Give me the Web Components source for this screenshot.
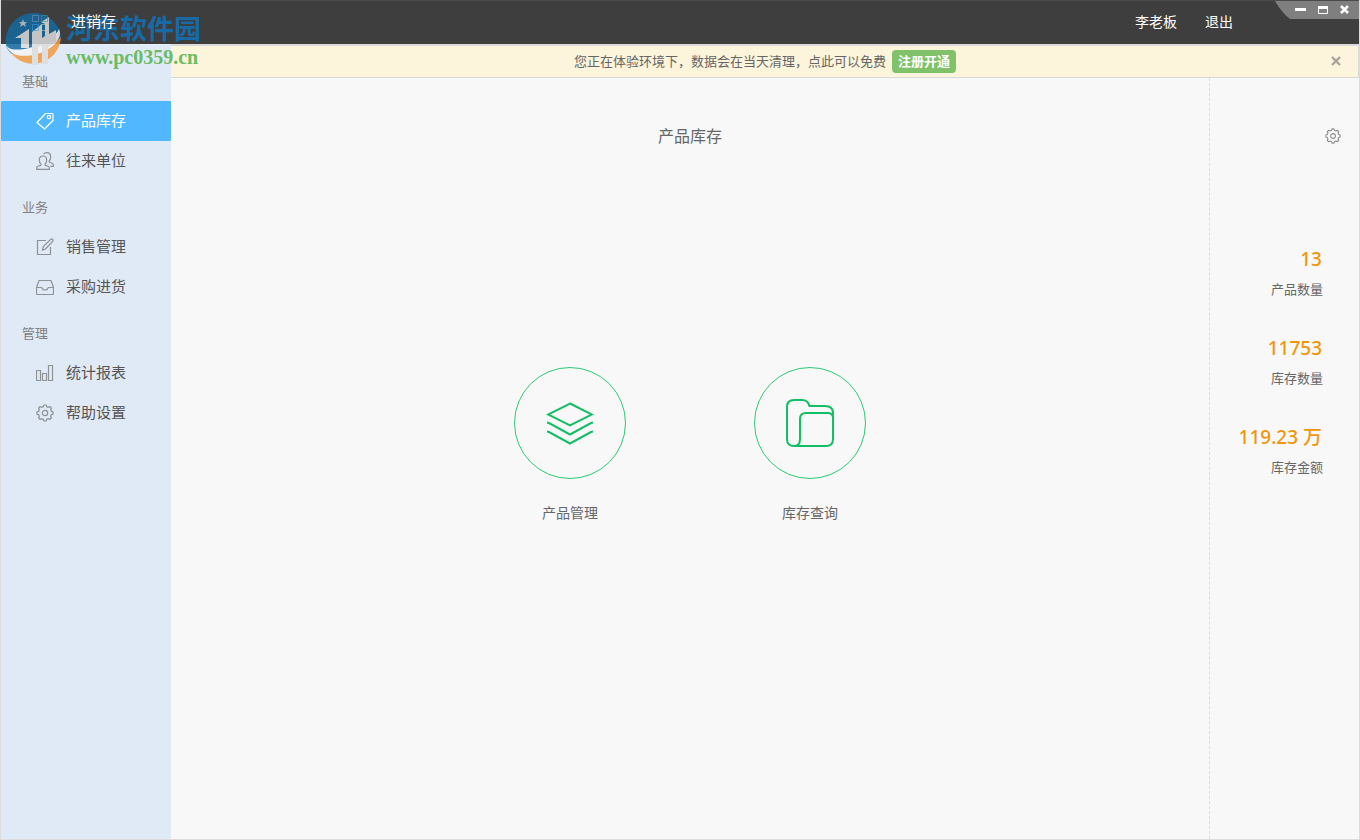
<!DOCTYPE html>
<html lang="zh-CN">
<head>
<meta charset="utf-8">
<title>进销存</title>
<style>
  html, body { margin: 0; }
  body { font: 13px/20px "Noto Sans CJK SC", sans-serif; color: #666; background: #f8f8f8; }
</style>
</head>
<body>
<app-frame>
  <app-header slot="header" heading="进销存" user="李老板"></app-header>
  <side-nav slot="nav">
    <nav-group label="基础">
      <nav-item icon="tag" active>产品库存</nav-item>
      <nav-item icon="users">往来单位</nav-item>
    </nav-group>
    <nav-group label="业务">
      <nav-item icon="edit">销售管理</nav-item>
      <nav-item icon="inbox">采购进货</nav-item>
    </nav-group>
    <nav-group label="管理">
      <nav-item icon="bars">统计报表</nav-item>
      <nav-item icon="gear">帮助设置</nav-item>
    </nav-group>
  </side-nav>
  <notice-bar slot="notice" action="注册开通">您正在体验环境下，数据会在当天清理，点此可以免费</notice-bar>
  <launch-pad slot="content" heading="产品库存">
    <launch-tile icon="layers">产品管理</launch-tile>
    <launch-tile icon="folder">库存查询</launch-tile>
  </launch-pad>
  <stat-panel slot="aside">
    <stat-item value="13">产品数量</stat-item>
    <stat-item value="11753">库存数量</stat-item>
    <stat-item value="119.23 万">库存金额</stat-item>
  </stat-panel>
  <site-mark slot="mark"></site-mark>
</app-frame>

<script>
const gearPath = (() => {
  const pts = [];
  for (let i = 0; i < 8; i++) {
    const a = i * 45;
    for (const [d, r] of [[-8, 8.1], [8, 8.1], [14, 6.6], [31, 6.6]]) {
      const t = (a + d) * Math.PI / 180;
      pts.push((9 + r * Math.sin(t)).toFixed(2) + ' ' + (9 - r * Math.cos(t)).toFixed(2));
    }
  }
  return 'M' + pts.join('L') + 'Z';
})();

const icons = {
  tag: '<path d="M1 10.500 9.500 1.500H16q1 0 1 1V8.500L8.500 17Z" stroke-linejoin="round"/><circle cx="13" cy="5" r="1.700"/>',
  users: '<path d="M.7 17.300v-1.600q0-1 1.200-1.400l2.600-.9q.8-.4.500-1.100C3.700 11 3.300 9.500 3.300 8c0-2.700 1.500-4 3.700-4s3.700 1.300 3.700 4c0 1.500-.4 3-1.700 4.300q-.3.700.5 1.100l2.600.9q1.200.4 1.200 1.400v1.600Z"/><path d="M7.500 2C8.200 1.200 9.300.7 10.700.7c2.600 0 4 1.600 4 4.200 0 1.600-.5 3.100-1.600 4.300q-.3.800.5 1.100l2.400.9q1.300.5 1.300 1.500v1.600h-3"/>',
  edit: '<path d="M10 2.500H1.500v14h13V9"/><path d="m6.500 12 .8-3.400 7.500-7.300q1-.8 1.900 0 .9 1 0 2L9.500 11Z"/>',
  inbox: '<path d="M.5 9.500 3 2.500h12l2.500 7v6q0 1-1 1h-15q-1 0-1-1Zm0 0H5q1 0 1.300 1 .4 1.500 2.700 1.500t2.700-1.500q.3-1 1.300-1h4.500"/>',
  bars: '<path d="M.5 6.500h4v10h-4Zm6 3h4v7h-4Zm6-8h4v15h-4Z"/>',
  gear: `<path d="${gearPath}" stroke-linejoin="round"/><circle cx="9" cy="9" r="2.700"/>`
};
const icon = (name, size) =>
  `<svg width="${size}" height="${size}" viewBox="0 0 18 18" fill="none" stroke="currentColor" stroke-width="1.200" aria-hidden="true">${icons[name]}</svg>`;

const glyphs = {
  layers: '<path d="M24 4.500 46 15.500 24 26.500 2 15.500Z"/><path d="M1 23.500l2 .5 21 11.500L45 24l2-.5M1 32.500l2 .5 21 11.500L45 33l2-.5"/>',
  folder: '<path d="M8 47Q1 47 1 40V8Q1 1 8 1h8q6 0 7.500 6H39q8 0 8 7v26q0 7-7 7Z"/><path d="M8 47q6 0 6-7V20q0-6 6-6h22q4 0 5 4"/>'
};

class Base extends HTMLElement {
  connectedCallback() {
    if (this.shadowRoot) return;
    this.attachShadow({ mode: 'open' }).innerHTML = this.render();
  }
}

customElements.define('app-frame', class extends Base {
  render() { return `
    <style>
      :host { display: flex; flex-direction: column; min-height: 100vh; box-sizing: border-box; position: relative;
        border: 1px solid #dcdcdc; border-top: 0; background: #f8f8f8; }
      .body { flex: 1; display: grid; grid-template-columns: 170px minmax(0, 1fr); }
      .page { display: flex; flex-direction: column; }
      .work { flex: 1; display: grid; grid-template-columns: minmax(0, 1fr) 150px; }
    </style>
    <slot name="header"></slot>
    <div class="body">
      <slot name="nav"></slot>
      <main class="page">
        <slot name="notice"></slot>
        <div class="work"><slot name="content"></slot><slot name="aside"></slot></div>
      </main>
    </div>
    <slot name="mark"></slot>`; }
});

customElements.define('app-header', class extends Base {
  render() { return `
    <style>
      :host { display: block; background: #3e3e3e; color: #fff; border-top: 1px solid #4a4a4a; }
      header { display: flex; height: 43px; box-sizing: border-box; padding-left: 30px; }
      .brand { display: flex; align-items: center; gap: 22px; flex: 1; }
      .brand svg { position: relative; z-index: 2; opacity: .6; }
      h1 { margin: 0; padding-bottom: 4px; font-size: 15px; line-height: 20px; font-weight: 400; position: relative; z-index: 2; }
      .account { display: flex; align-items: center; gap: 28px; padding-bottom: 4px; margin-right: 42px; font-size: 14px; }
      a { color: inherit; text-decoration: none; }
      .controls { display: flex; align-items: center; justify-content: flex-end; gap: 4px; box-sizing: border-box;
        width: 84px; height: 18px; padding-right: 5px; background: #7f7f7f; clip-path: path("M0 0H84V18H15Q7 12 0 0Z"); }
      button { display: flex; align-items: center; justify-content: center; width: 18px; height: 18px; padding: 0; border: 0; background: none; color: #fff; }
    </style>
    <header>
      <div class="brand">
        <svg width="18" height="18" viewBox="0 0 18 18" fill="none" aria-hidden="true">
          <path d="M1.500 1.500h6v6h-6Z" stroke="#7f93b8"/><path d="M10.500 1.500h6v6h-6Z" stroke="#22a6a0"/>
          <path d="M1.500 10.500h6v6h-6Z" stroke="#3aa0e8"/><path d="M10.500 10.500h6v6h-6Z" stroke="#e8c58e"/>
        </svg>
        <h1>${this.getAttribute('heading')}</h1>
      </div>
      <nav class="account"><a href="#user">${this.getAttribute('user')}</a><a href="#logout">退出</a></nav>
      <div class="controls">
        <button type="button" aria-label="最小化"><svg width="12" height="10"><path d="M0 3h11v3H0Z" fill="#fff"/></svg></button>
        <button type="button" aria-label="最大化"><svg width="10" height="8"><path d="M.5.5h9v7h-9Z" fill="none" stroke="#fff"/><path d="M0 0h10v3H0Z" fill="#fff"/></svg></button>
        <button type="button" aria-label="关闭"><svg width="10" height="10"><path d="m1 1 7 7m0-7-7 7" stroke="#fff" stroke-width="2.600"/></svg></button>
      </div>
    </header>`; }
});

customElements.define('side-nav', class extends Base {
  render() { return `
    <style>:host { display: block; background: #e0eaf6; border-top: 1px solid #e8eef6; padding-top: 10px; }</style>
    <nav><slot></slot></nav>`; }
});

customElements.define('nav-group', class extends Base {
  render() { return `
    <style>
      :host { display: block; padding-top: 6px; }
      h2 { margin: 0; padding-left: 21px; font-size: 13px; line-height: 40px; font-weight: 400; color: #808080; }
    </style>
    <h2>${this.getAttribute('label')}</h2>
    <slot></slot>`; }
});

customElements.define('nav-item', class extends Base {
  render() { return `
    <style>
      :host { display: block; }
      a { display: flex; align-items: center; gap: 12px; height: 40px; padding-left: 35px; font-size: 15px; line-height: 20px; color: #555; text-decoration: none; }
      span { padding-bottom: 3px; }
      svg { color: #8e9196; }
      :host([active]) a { background: #51b8ff; color: #fff; border-radius: 1px; }
      :host([active]) svg { color: #fff; }
    </style>
    <a href="#${this.getAttribute('icon')}">${icon(this.getAttribute('icon'), 18)}<span><slot></slot></span></a>`; }
});

customElements.define('notice-bar', class extends Base {
  render() { return `
    <style>
      :host { display: flex; align-items: center; box-sizing: border-box; height: 34px; padding: 0 16px 0 28px;
        background: #fcf4db; border: 1px solid #d8d8d8; border-left: 0; border-top: 2px solid #dadada; }
      p { flex: 1; display: flex; align-items: center; justify-content: center; gap: 6px; margin: 0; }
      span { padding-bottom: 2px; }
      a { padding: 0 6px; height: 23px; line-height: 21px; border-radius: 4px; background: #80c269; color: #fff; font-weight: 700; text-decoration: none; }
      button { display: flex; padding: 0; border: 0; background: none; }
    </style>
    <p><span><slot></slot></span><a href="#register">${this.getAttribute('action')}</a></p>
    <button type="button" aria-label="关闭提示"><svg width="11" height="11"><path d="m1 1 8 8m0-8-8 8" stroke="#a6a39a" stroke-width="2.400"/></svg></button>`; }
});

customElements.define('launch-pad', class extends Base {
  render() { return `
    <style>
      :host { display: block; padding-top: 45px; }
      h2 { margin: 0; font-size: 16px; line-height: 24px; font-weight: 400; text-align: center; }
      .tiles { display: flex; justify-content: center; gap: 128px; padding-top: 220px; }
    </style>
    <h2>${this.getAttribute('heading')}</h2>
    <div class="tiles"><slot></slot></div>`; }
});

customElements.define('launch-tile', class extends Base {
  render() { return `
    <style>
      :host { display: block; }
      button { display: flex; flex-direction: column; align-items: center; gap: 23px; width: 112px; padding: 0; border: 0; background: none; font: inherit; font-size: 14px; color: inherit; }
      .ring { display: flex; align-items: center; justify-content: center; box-sizing: border-box; width: 112px; height: 112px; border: 1px solid #2fc777; border-radius: 50%; }
    </style>
    <button type="button">
      <span class="ring"><svg width="48" height="48" viewBox="0 0 48 48" fill="none" stroke="#13be66" stroke-width="2" aria-hidden="true">${glyphs[this.getAttribute('icon')]}</svg></span>
      <slot></slot>
    </button>`; }
});

customElements.define('stat-panel', class extends Base {
  render() { return `
    <style>
      :host { display: flex; flex-direction: column; padding: 50px 18px 0 0; border-left: 1px dashed #dcdcdc; }
      button { align-self: flex-end; display: flex; padding: 0; border: 0; background: none; color: #8c8c8c; }
      .list { display: flex; flex-direction: column; gap: 29px; padding: 100px 18px 0 0; }
    </style>
    <button type="button" aria-label="设置">${icon('gear', 16)}</button>
    <div class="list"><slot></slot></div>`; }
});

customElements.define('stat-item', class extends Base {
  render() { return `
    <style>
      :host { display: flex; flex-direction: column; text-align: right; }
      strong { padding-right: 1px; font: 500 19px/30px "Noto Sans", "Noto Sans CJK SC", sans-serif; color: #f0960a; }
      span { line-height: 30px; }
    </style>
    <strong>${this.getAttribute('value')}</strong><span><slot></slot></span>`; }
});

customElements.define('site-mark', class extends Base {
  render() { return `
    <style>
      :host { position: absolute; left: 4px; top: 10px; z-index: 1; display: flex; gap: 4px; pointer-events: none; opacity: .85; }
      .name { font-size: 27px; line-height: 36px; font-weight: 700; color: #1272b9; }
      .site { font: 700 20px/22px "Liberation Serif", serif; color: #56b34c; }
    </style>
    <svg width="57" height="58" viewBox="0 0 57 58" aria-hidden="true">
      <path d="M1 35A28 28 0 0 1 54 19Q56 24 56 28L41 38 22 43 7 44Q2 40 1 35Z" fill="#14699f"/>
      <path d="M56 27A28 28 0 0 1 6 43Q25 49 41 39 53 31 56 27Z" fill="#f19a42"/>
      <path d="M1 33C1 40 11 41 24 38 40 34 51 26 54 19 59 29 45 42 28 45 12 48 2 43 1 33Z" fill="#f4f4f4"/>
      <path d="M10 28 24 19V38H16V28ZM27 22 37 14V35L33 37V55H27ZM36 12 44 7V24L51 20V32L43 37V54H37V28L40 26V14Z" fill="#dcdcdc"/>
      <path d="M18 9l1 3h3l-2 2 1 3-3-2-3 2 1-3-2-2h3Z" fill="#b8c4ce"/>
    </svg>
    <div><div class="name">河东软件园</div><div class="site">www.pc0359.cn</div></div>`; }
});
</script>
</body>
</html>
